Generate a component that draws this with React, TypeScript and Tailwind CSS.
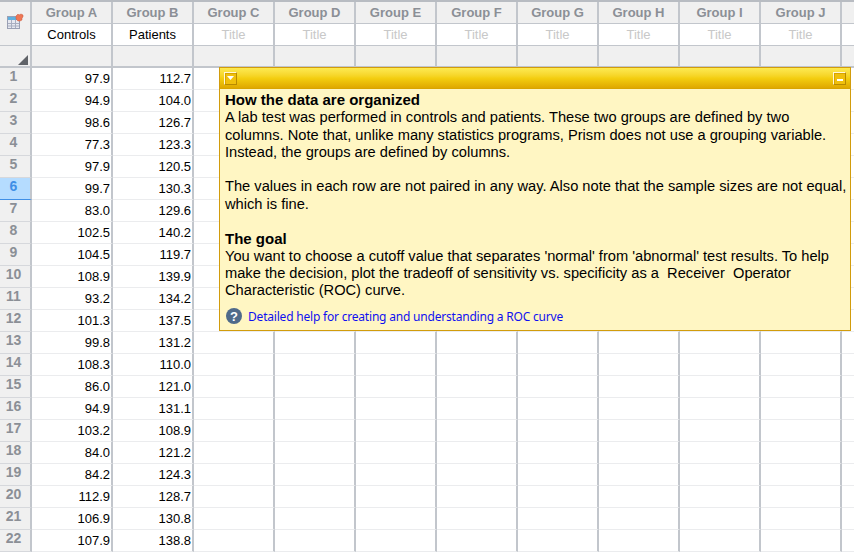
const groups = ["A", "B", "C", "D", "E", "F", "G", "H", "I", "J"];

const titles = ["Controls", "Patients"];

const rows = [
  ["97.9", "112.7"],
  ["94.9", "104.0"],
  ["98.6", "126.7"],
  ["77.3", "123.3"],
  ["97.9", "120.5"],
  ["99.7", "130.3"],
  ["83.0", "129.6"],
  ["102.5", "140.2"],
  ["104.5", "119.7"],
  ["108.9", "139.9"],
  ["93.2", "134.2"],
  ["101.3", "137.5"],
  ["99.8", "131.2"],
  ["108.3", "110.0"],
  ["86.0", "121.0"],
  ["94.9", "131.1"],
  ["103.2", "108.9"],
  ["84.0", "121.2"],
  ["84.2", "124.3"],
  ["112.9", "128.7"],
  ["106.9", "130.8"],
  ["107.9", "138.8"],
];

function TableIcon() {
  return (
    <svg width="17" height="17" viewBox="0 0 17 17">
      <rect x="0.5" y="3.5" width="12" height="12" fill="#e6e8f0" stroke="#9aa0b4" />
      <rect x="1" y="4" width="11" height="3" fill="#5fb0e0" />
      <path d="M4.5 7v8M8.5 7v8M1 10.5h11M1 13h11" stroke="#a8aec0" />
      <path d="M9 3l1-1 1-1 1 1 2-1 2 1v2l-1 1 0 2-2 1-2 0-2-2z" fill="#ee7755" stroke="#c8583c" strokeWidth="0.5" />
    </svg>
  );
}

function PanelButton({ kind }: { kind: "down" | "min" }) {
  return (
    <div className="flex h-[13px] w-[13px] items-center justify-center border border-[#fff8d8] border-r-[#b88a00] border-b-[#b88a00] bg-[#f0c00c] shadow-[inset_1px_1px_0_#d8a400]">
      {kind === "down" ? (
        <svg width="7" height="4" viewBox="0 0 7 4">
          <path d="M0 0h7L3.5 4z" fill="#ffffff" />
        </svg>
      ) : (
        <div className="mt-[3px] h-[2px] w-[6px] bg-white" />
      )}
    </div>
  );
}

function HelpPanel() {
  return (
    <div className="absolute top-[67px] left-[219px] h-[264px] w-[632px] border border-[#d29c0c] bg-[#fff6c3] text-[14.67px] leading-[17.3px] whitespace-nowrap text-black">
      <div className="flex h-[21px] items-center justify-between border-b border-[#d9a400] bg-gradient-to-b from-[#fdea50] via-[#f4cf10] to-[#dfa800] px-[4px]">
        <PanelButton kind="down" />
        <PanelButton kind="min" />
      </div>
      <div className="px-[5px] pt-[2px]">
        <p className="text-[15px] leading-[18.3px] font-bold">How the data are organized</p>
        <p>
          A lab test was performed in controls and patients. These two groups are defined by two
          <br />
          columns. Note that, unlike many statistics programs, Prism does not use a grouping variable.
          <br />
          Instead, the groups are defined by columns.
        </p>
        <p className="mt-[17.3px]">
          The values in each row are not paired in any way. Also note that the sample sizes are not equal,
          <br />
          which is fine.
        </p>
        <p className="mt-[17.3px] text-[15px] font-bold">The goal</p>
        <p>
          You want to choose a cutoff value that separates 'normal' from 'abnormal' test results. To help
          <br />
          make the decision, plot the tradeoff of sensitivity vs. specificity as a&nbsp; Receiver&nbsp; Operator
          <br />
          Characteristic (ROC) curve.
        </p>
        <div className="mt-[8px] flex items-center gap-[6px] pl-[1px]">
          <div className="flex h-[16px] w-[16px] items-center justify-center rounded-full bg-[#4f6a8a] text-[13px] font-bold text-white">
            ?
          </div>
          <a className="font-['Noto_Sans',sans-serif] text-[12px] tracking-[-0.2px] text-[#1010f0]">
            Detailed help for creating and understanding a ROC curve
          </a>
        </div>
      </div>
    </div>
  );
}

export default function App() {
  return (
    <div className="relative h-[552px] w-[854px] overflow-hidden bg-white font-['Liberation_Sans',Arial,sans-serif]">
      <div className="h-[2px] bg-[#b8bcc2]" />

      {/* header block */}
      <div className="flex">
        <div className="relative flex h-[66px] w-[32px] shrink-0 justify-center border-r-2 border-[#c2c6cc] bg-[#f0f0f0] pt-[11px]">
          <TableIcon />
          <div className="absolute right-[2px] bottom-[3px] h-0 w-0 border-b-[10px] border-l-[10px] border-b-[#606368] border-l-transparent" />
          <div className="absolute inset-x-0 top-[43px] h-px bg-[#c2c6cc]" />
          <div className="absolute inset-x-0 bottom-0 h-[2px] bg-[#c2c6cc]" />
        </div>
        {groups.map((g, i) => (
          <div key={g} className="flex h-[66px] w-[81px] shrink-0 flex-col border-r-2 border-[#c2c6cc]">
            <div className="flex h-[21px] items-center justify-center bg-[#f0f0f0] text-[13px] font-bold text-[#8b8f96]">
              Group {g}
            </div>
            <div className="flex h-[23px] items-center justify-center border-y border-[#c2c6cc] text-[13px] text-black">
              {titles[i] ?? <span className="text-[#c8c8c8]">Title</span>}
            </div>
            <div className="h-[22px] border-b-2 border-[#c2c6cc] bg-[#f0f0f0]" />
          </div>
        ))}
        <div className="flex h-[66px] grow flex-col bg-[#f0f0f0]">
          <div className="h-[21px]" />
          <div className="h-[23px] border-y border-[#c2c6cc] bg-white" />
          <div className="h-[22px] border-b-2 border-[#c2c6cc]" />
        </div>
      </div>

      {/* data rows */}
      {rows.map((r, i) => (
        <div key={i} className="flex h-[22px]">
          <div
            className={
              i === 5
                ? "flex w-[32px] shrink-0 justify-center border-r-2 border-b border-r-[#c2c6cc] border-b-[#3f8fe6] bg-[#b5dcff] pr-[3px] text-[14px] leading-[17px] font-bold text-[#3f8fe6]"
                : "flex w-[32px] shrink-0 justify-center border-r-2 border-b border-r-[#c2c6cc] border-b-[#d6d8dc] bg-[#f0f0f0] pr-[3px] text-[14px] leading-[17px] font-bold text-[#8b8f96]"
            }
          >
            {i + 1}
          </div>
          {groups.map((g, c) => (
            <div
              key={g}
              className="flex w-[81px] shrink-0 items-center justify-end border-r-2 border-b border-r-[#c2c6cc] border-b-[#ebecee] pr-[1px] text-[13px] text-black"
            >
              {r[c]}
            </div>
          ))}
          <div className="grow border-b border-[#ebecee]" />
        </div>
      ))}

      <HelpPanel />
    </div>
  );
}
